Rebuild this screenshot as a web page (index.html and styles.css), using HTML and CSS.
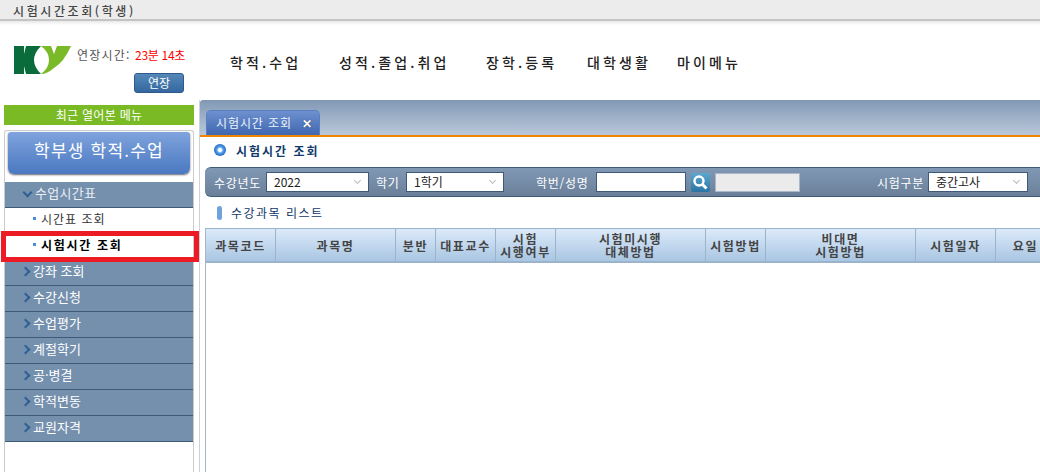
FILE: index.html
```html
<!DOCTYPE html>
<html lang="ko">
<head>
<meta charset="utf-8">
<title>시험시간조회(학생)</title>
<link rel="stylesheet" href="styles.css">
</head>
<body>
<div class="titlebar">시험시간조회(학생)</div>
<header class="header">
  <svg class="logo" viewBox="0 0 57 28" width="57" height="28">
    <rect x="0" y="0" width="10" height="28" fill="#0a6b3b"/>
    <path d="M9.5 10 L12 0 H27 Q20 7 20 14 Q20 21 27 28 H12 L9.5 18 Z" fill="#0a6b3b"/>
    <path d="M27 0 H37 L40 8 L43 0 H57 Q50 16 40 22 Q33 28 27 28 Q35 22 35 14 Q35 6 27 0 Z" fill="#7ab928"/>
  </svg>
  <div class="session">
    <div class="session-time">연장시간: <span class="remain">23분 14초</span></div>
    <button class="extend">연장</button>
  </div>
  <nav class="gnb">
    <a class="gnb-1">학적.수업</a>
    <a class="gnb-2">성적.졸업.취업</a>
    <a class="gnb-3">장학.등록</a>
    <a class="gnb-4">대학생활</a>
    <a class="gnb-5">마이메뉴</a>
  </nav>
</header>
<div class="layout">
  <aside class="side">
    <div class="recent">최근 열어본 메뉴</div>
    <div class="side-panel">
      <div class="side-title">학부생 학적.수업</div>
      <ul class="menu">
        <li class="menu-item"><span class="chev down"></span><span class="open-label">수업시간표</span></li>
        <li class="sub"><span class="dot"></span>시간표 조회</li>
        <li class="sub active"><span class="dot"></span>시험시간 조회<span class="highlight"></span></li>
        <li class="menu-item"><span class="chev"></span>강좌 조회</li>
        <li class="menu-item"><span class="chev"></span>수강신청</li>
        <li class="menu-item"><span class="chev"></span>수업평가</li>
        <li class="menu-item"><span class="chev"></span>계절학기</li>
        <li class="menu-item"><span class="chev"></span>공·병결</li>
        <li class="menu-item"><span class="chev"></span>학적변동</li>
        <li class="menu-item"><span class="chev"></span>교원자격</li>
      </ul>
    </div>
  </aside>
  <main class="main">
    <div class="tabbar">
      <div class="tab">시험시간 조회<span class="tab-x">✕</span></div>
    </div>
    <div class="content">
      <h1 class="page-title"><span class="bullet"></span>시험시간 조회</h1>
      <div class="filters">
        <label class="lbl lbl-year">수강년도</label>
        <div class="sel sel-year">2022<span class="caret"></span></div>
        <label class="lbl lbl-term">학기</label>
        <div class="sel sel-term">1학기<span class="caret"></span></div>
        <label class="lbl lbl-id">학번/성명</label>
        <div class="input"></div>
        <button class="search"><svg viewBox="0 0 19 19" width="19" height="19"><circle cx="8" cy="8" r="4.5" fill="none" stroke="#fff" stroke-width="2.4"/><path d="M11.5 11.5 L15.5 15.5" stroke="#fff" stroke-width="3"/></svg></button>
        <div class="input-off"></div>
        <label class="lbl lbl-kind">시험구분</label>
        <div class="sel sel-kind">중간고사<span class="caret"></span></div>
      </div>
      <h2 class="list-title"><span class="marker"></span>수강과목 리스트</h2>
      <div class="grid">
        <div class="th">과목코드</div>
        <div class="th">과목명</div>
        <div class="th">분반</div>
        <div class="th">대표교수</div>
        <div class="th">시험<br>시행여부</div>
        <div class="th">시험미시행<br>대체방법</div>
        <div class="th">시험방법</div>
        <div class="th">비대면<br>시험방법</div>
        <div class="th">시험일자</div>
        <div class="th">요일</div>
      </div>
    </div>
  </main>
</div>
</body>
</html>
```
FILE: styles.css
```css
* { box-sizing: border-box; margin: 0; padding: 0; }
html, body { width: 1040px; height: 472px; overflow: hidden; background: #fff; }
body { font-family: "Noto Sans CJK KR", "Liberation Sans", sans-serif; font-size: 12px; color: #333; display: flex; flex-direction: column; }

.titlebar { height: 19px; flex: none; background: #ececec; padding-left: 13px; font-size: 12px; line-height: 22px; font-weight: 500; letter-spacing: 2.6px; color: #444; overflow: hidden; }

.header { height: 81px; flex: none; display: flex; align-items: flex-start; border-top: 2px solid #c4c4c4; background: linear-gradient(#e8e8e8, #fff 4px); position: relative; }
.logo { flex: none; margin: 25px 0 0 14px; }
.session { width: 107px; margin: 25px 0 0 7px; display: flex; flex-direction: column; align-items: flex-end; }
.session-time { font-size: 12px; line-height: 18px; color: #555; white-space: nowrap; letter-spacing: 1.2px; }
.remain { color: #f00; letter-spacing: -0.3px; }
.extend { width: 50px; height: 20px; margin: 9px 1px 0 0; border: 1px solid #2c5a8c; border-radius: 3px; background: linear-gradient(#5587b8, #34689f); color: #fff; font: 12px/16px "Noto Sans CJK KR", sans-serif; }

.gnb { display: flex; margin: 30px 0 0 45px; font-size: 14px; line-height: 22px; font-weight: 500; color: #222; letter-spacing: 3.1px; white-space: nowrap; }
.gnb-1 { width: 109px; }
.gnb-2 { width: 147px; }
.gnb-3 { width: 101px; }
.gnb-4 { width: 90px; }

.layout { flex: 1; display: flex; min-height: 0; }

.side { width: 199px; flex: none; padding: 5px 5px 0 4px; display: flex; flex-direction: column; }
.recent { height: 20px; flex: none; background: #7aba24; color: #fff; font-size: 12px; line-height: 20px; text-align: center; letter-spacing: 0.3px; }
.side-panel { flex: 1; margin-top: 5px; border: 1px solid #ccc; border-bottom: 0; border-radius: 3px 3px 0 0; padding-top: 1px; }
.side-title { height: 42px; margin: 0 3px; border-radius: 3px 3px 6px 6px; background: linear-gradient(#7fa3dd, #4a78c0); color: #fff; font-size: 17px; line-height: 36px; text-align: center; letter-spacing: 1.2px; box-shadow: 0 1px 2px #667; }
.menu { list-style: none; margin-top: 8px; }
.menu-item { height: 26px; background: #7490ad; border-bottom: 1px solid #3f5a78; color: #fff; font-size: 13px; display: flex; align-items: center; padding: 0 0 4px 17px; }
.open-label { margin-left: 4px; color: #e8eef4; letter-spacing: 0.3px; }
.chev { width: 7px; height: 7px; border: solid #2f5f96; border-width: 2.5px 2.5px 0 0; transform: rotate(45deg); margin: 2px 4px 0 0; flex: none; }
.chev.down { transform: rotate(135deg); margin: 0 0 0 2px; }
.sub { height: 26px; position: relative; display: flex; align-items: center; padding: 0 0 6px 28px; font-size: 12px; color: #333; letter-spacing: 1px; }
.dot { width: 3px; height: 3px; background: #4a90d9; margin-right: 5px; flex: none; }
.active { font-weight: 700; color: #000; letter-spacing: 1.7px; }
.highlight { position: absolute; left: -4px; right: -6px; top: -3px; bottom: -2px; border: 5px solid #ed1c24; }

.main { flex: 1; min-width: 0; border-left: 1px solid #ccd3da; display: flex; flex-direction: column; }
.tabbar { height: 37px; flex: none; background: linear-gradient(#8198b5, #b9c9da); border-bottom: 2px solid #f08300; border-radius: 3px 0 0 0; padding: 10px 0 0 6px; display: flex; }
.tab { width: 114px; height: 25px; background: linear-gradient(#6e90cf, #3f68b0); border: 1px solid #5a7fc0; border-bottom: 0; border-radius: 5px 5px 0 0; color: #eef3fa; font-size: 12px; line-height: 24px; padding-left: 9px; letter-spacing: 0.9px; white-space: nowrap; display: flex; }
.tab-x { margin-left: 10px; font-size: 12px; font-weight: 700; color: #fff; text-shadow: 0 0 1px #223; }

.content { flex: 1; display: flex; flex-direction: column; padding-left: 5px; overflow: hidden; }
.page-title { height: 30px; flex: none; display: flex; align-items: center; padding: 0 0 4px 9px; font-size: 12px; font-weight: 700; color: #123a6b; letter-spacing: 2px; }
.bullet { width: 12px; height: 12px; border-radius: 50%; background: radial-gradient(circle, #fff 0 1.5px, #5aa5ea 3px, #1f68c6 6px); margin-right: 10px; }

.filters { height: 30px; flex: none; width: 836px; background: linear-gradient(#8198b5, #6a8099); border: solid #3f5a78; border-width: 1px 0; border-radius: 6px 0 0 6px; display: flex; align-items: center; color: #fff; font-size: 12px; white-space: nowrap; }
.lbl { letter-spacing: 0.7px; }
.lbl-year { margin-left: 9px; width: 52px; }
.sel { height: 20px; background: #fff; border: 1px solid #3f5a78; color: #222; line-height: 18px; padding-left: 7px; position: relative; }
.caret { position: absolute; right: 8px; top: 5px; width: 5px; height: 5px; border: solid #bbb; border-width: 0 1px 1px 0; transform: rotate(45deg); }
.sel-year { width: 103px; }
.lbl-term { margin-left: 7px; width: 30px; }
.sel-term { width: 98px; }
.lbl-id { margin-left: 32px; width: 60px; }
.input { width: 90px; height: 20px; background: #fff; border: 1px solid #3f5a78; }
.search { width: 19px; height: 19px; margin-left: 5px; background: linear-gradient(#5aa7cf, #2a74a6); border: 0; border-radius: 2px; padding: 0; display: block; }
.input-off { width: 85px; height: 19px; margin-left: 5px; background: #ebebeb; border: 1px solid #a9b8c8; }
.lbl-kind { margin-left: 77px; width: 51px; }
.sel-kind { width: 100px; }

.list-title { height: 31px; flex: none; display: flex; align-items: center; padding-left: 12px; font-size: 12px; font-weight: 400; color: #123a6b; letter-spacing: 1.5px; }
.marker { width: 5px; height: 14px; border-radius: 3px; background: #6fa3dc; margin-right: 9px; }

.grid { flex: 1; display: grid; grid-template-columns: 70px 120px 40px 60px 60px 150px 60px 150px 80px 60px; grid-template-rows: 35px; align-content: start; width: 851px; flex-shrink: 0; border-left: 1px solid #a7b6c6; }
.th { height: 35px; background: linear-gradient(#dceafa, #a9c6e2); border-top: 1px solid #9cb3cc; border-bottom: 2px solid #9cb3cc; border-right: 1px solid #9cb3cc; display: flex; align-items: center; justify-content: center; text-align: center; font-size: 12px; line-height: 13px; font-weight: 700; color: #444; letter-spacing: 1.6px; white-space: nowrap; }
```
